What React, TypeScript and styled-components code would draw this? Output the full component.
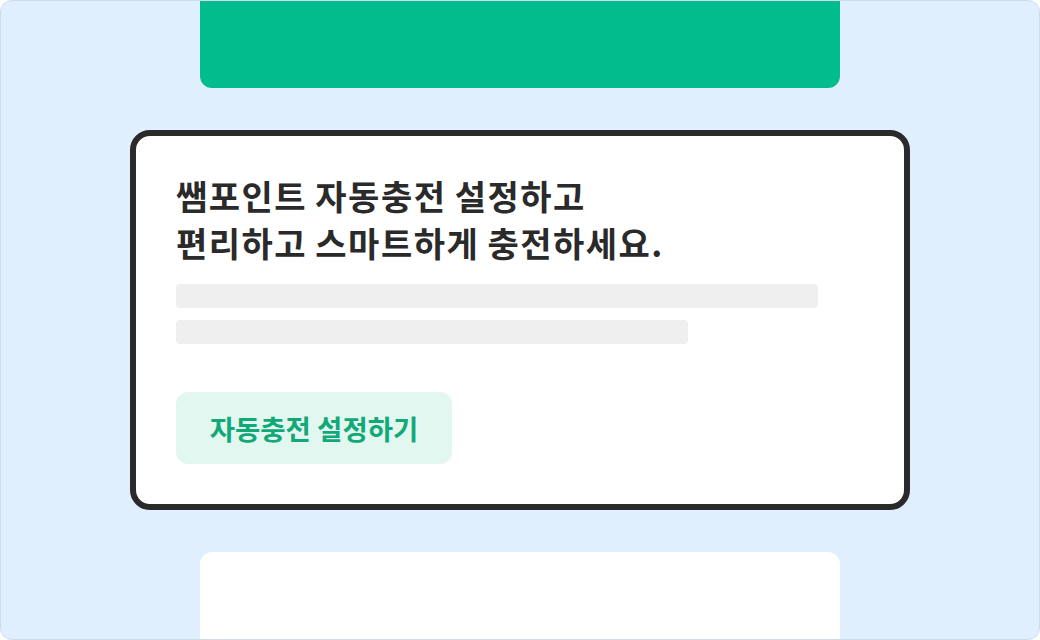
import React from "react";
import styled, { createGlobalStyle } from "styled-components";

const Global = createGlobalStyle`
  html, body { margin: 0; padding: 0; background: #ffffff; }
  body { font-family: "Noto Sans CJK KR", "Noto Sans", sans-serif; }
  * { box-sizing: border-box; }
`;

const Frame = styled.div`
  width: 1040px;
  height: 640px;
  background: #e0effe;
  border: 1px solid #cadcee;
  border-radius: 12px;
  overflow: hidden;
  display: flex;
  flex-direction: column;
  align-items: center;
  gap: 42px;
`;

const TopCard = styled.div`
  flex: none;
  width: 640px;
  height: 87px;
  background: #02bc8d;
  border-radius: 0 0 12px 12px;
`;

const MainCard = styled.div`
  flex: none;
  width: 780px;
  height: 380px;
  background: #ffffff;
  border: 6px solid #2a2a2a;
  border-radius: 20px;
  padding: 36px 40px 0 40px;
  display: flex;
  flex-direction: column;
  align-items: flex-start;
`;

const Heading = styled.h1`
  margin: 0;
  font-family: "Noto Sans CJK KR", sans-serif;
  font-size: 34px;
  font-weight: 700;
  line-height: 47px;
  color: #2a2a2a;
  letter-spacing: 1.5px;
  word-spacing: -1px;
  white-space: nowrap;
`;

const Bars = styled.div`
  display: flex;
  flex-direction: column;
  gap: 12px;
  margin-top: 18px;
`;

const Bar = styled.div<{ $w: number }>`
  width: ${(p) => p.$w}px;
  height: 24px;
  background: #efefef;
  border-radius: 4px;
`;

const Button = styled.button`
  margin-top: 48px;
  width: 276px;
  height: 72px;
  border: none;
  border-radius: 12px;
  background: #e3f7f1;
  color: #12a978;
  font-family: "Noto Sans CJK KR", sans-serif;
  font-size: 27.5px;
  font-weight: 700;
  padding: 0;
  cursor: pointer;
`;

const BottomCard = styled.div`
  flex: none;
  width: 640px;
  height: 120px;
  background: #ffffff;
  border-radius: 12px;
`;

export default function App() {
  return (
    <>
      <Global />
      <Frame>
        <TopCard />
        <MainCard>
          <Heading>
            쌤포인트 자동충전 설정하고
            <br />
            편리하고 스마트하게 충전하세요.
          </Heading>
          <Bars>
            <Bar $w={642} />
            <Bar $w={512} />
          </Bars>
          <Button>자동충전 설정하기</Button>
        </MainCard>
        <BottomCard />
      </Frame>
    </>
  );
}
